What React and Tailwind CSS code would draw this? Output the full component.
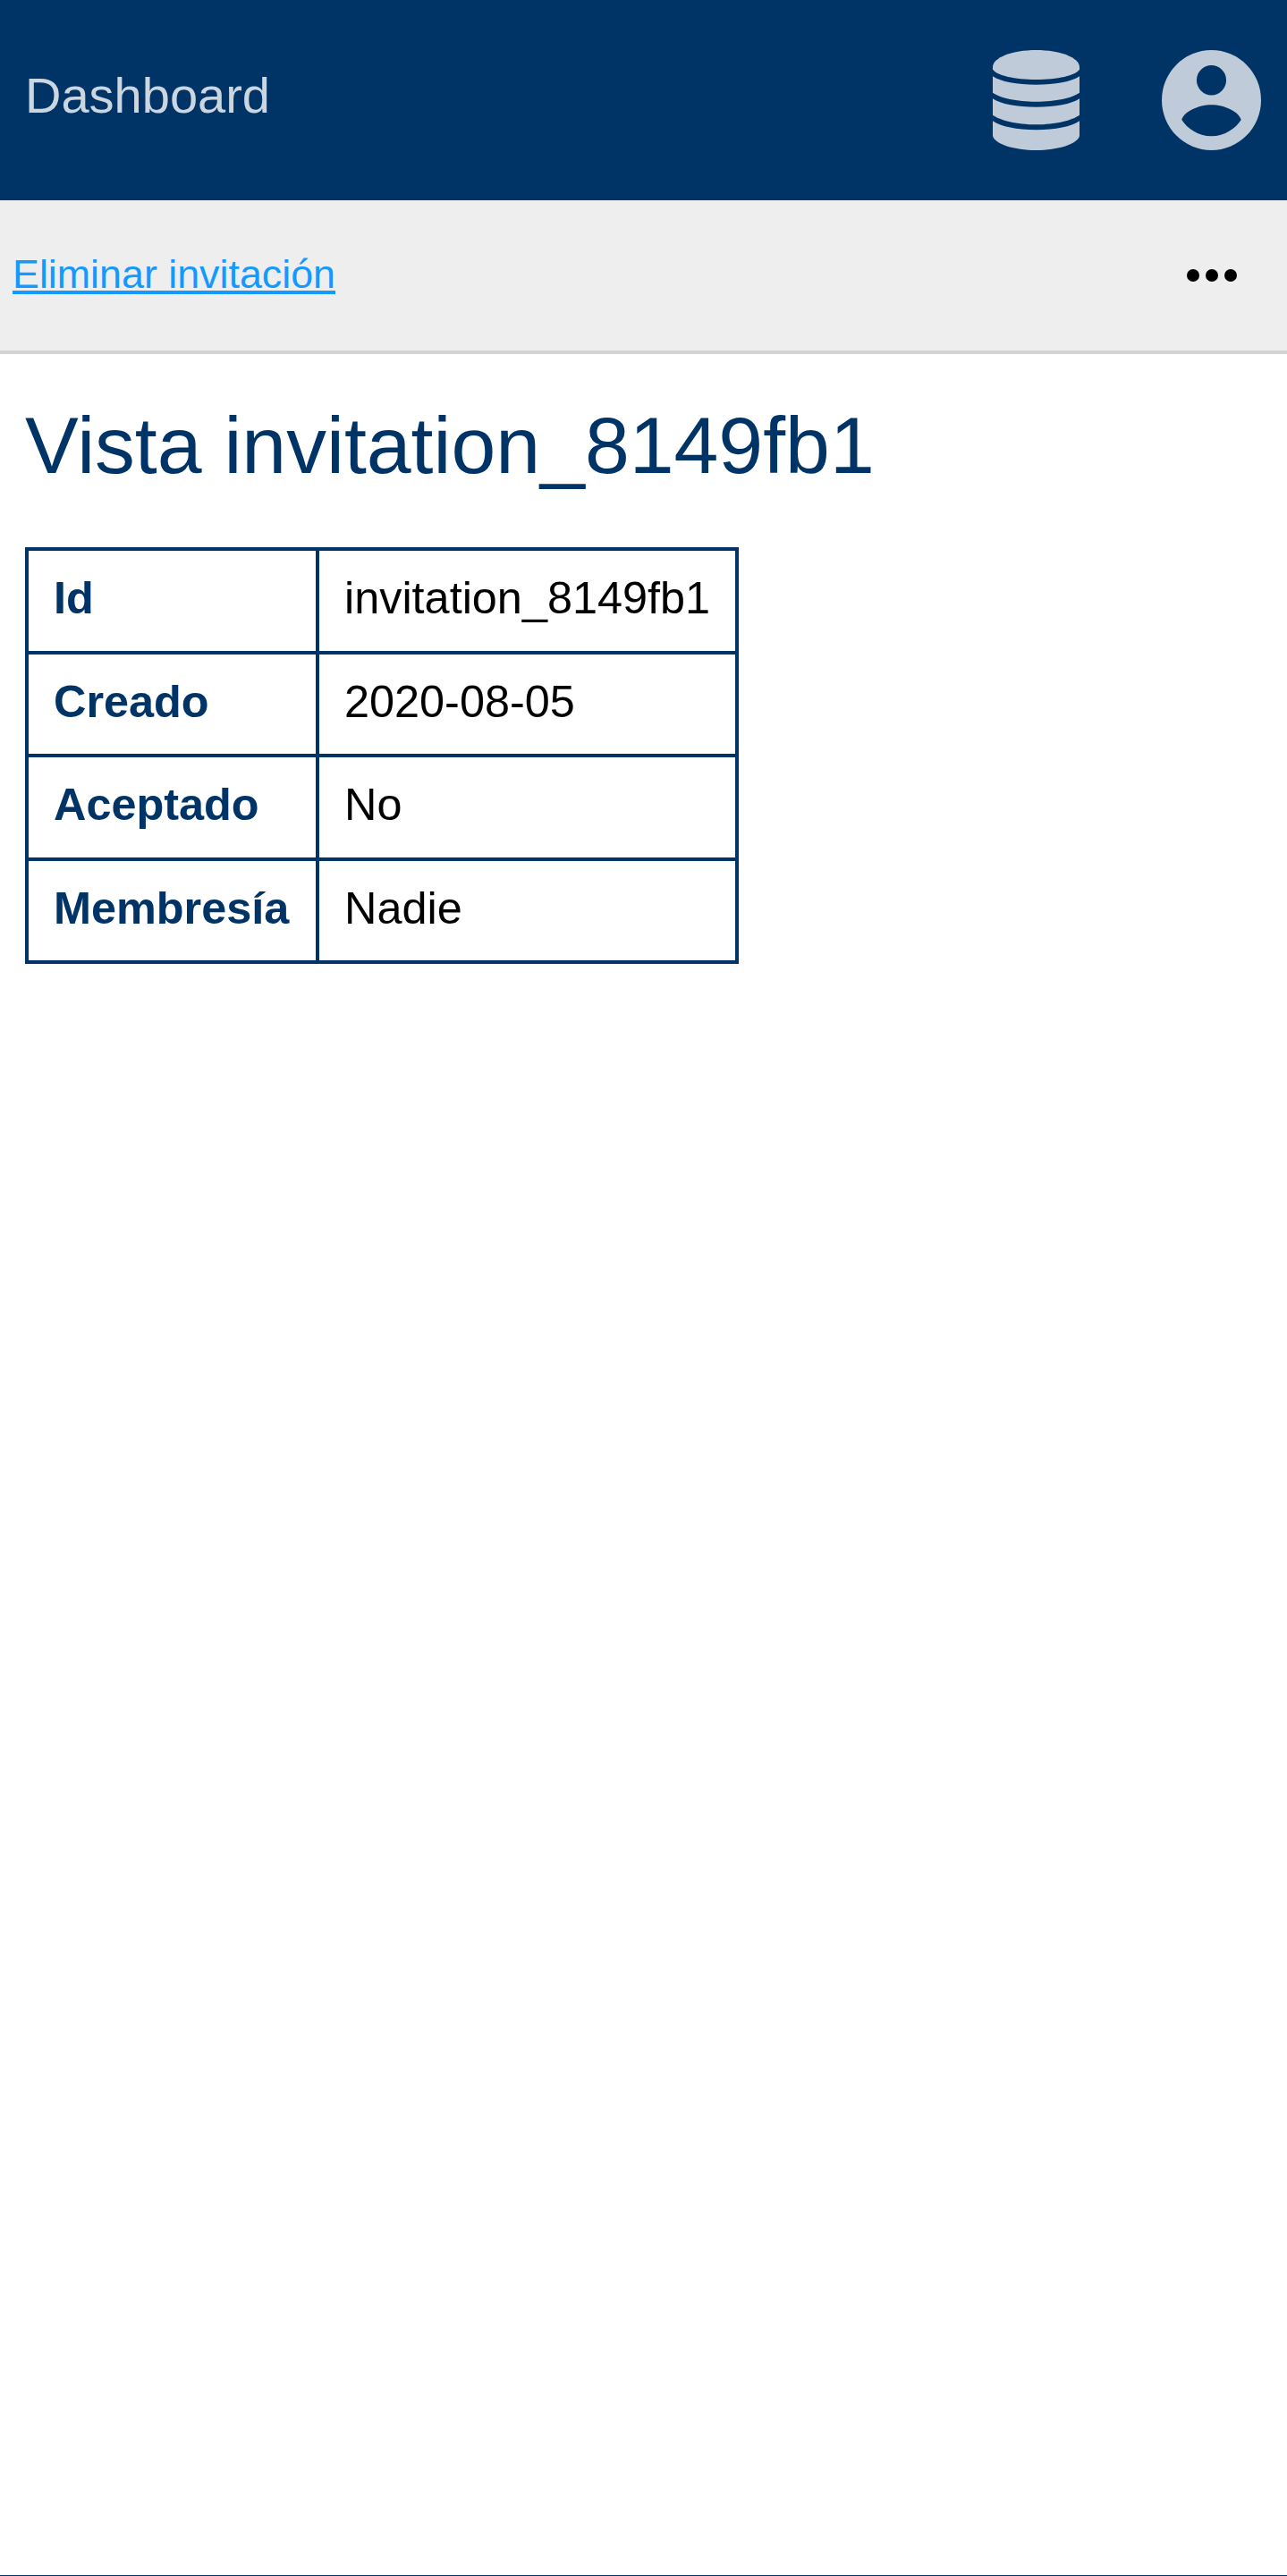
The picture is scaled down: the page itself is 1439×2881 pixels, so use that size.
import React from "react";

const rows = [
  ["Id", "invitation_8149fb1"],
  ["Creado", "2020-08-05"],
  ["Aceptado", "No"],
  ["Membresía", "Nadie"],
];

function DatabaseIcon() {
  return (
    <svg viewBox="0 0 97 112" className="w-[97px] h-[112px] fill-[#bfcbd8]">
      <path d="M0 19C0 8.500 21.700 0 48.500 0S97 8.500 97 19V21.500C93 28.500 72 33 48.500 33S4 28.500 0 21.500Z" />
      <path d="M0 29.300C9 35.500 27 38.700 48.500 38.700S88 35.500 97 29.300V47.700C89 53.500 70 57.700 48.500 57.700S8 53.500 0 47.700Z" />
      <path d="M0 54.300C9 60.500 27 63.700 48.500 63.700S88 60.500 97 54.300V72.700C89 78.500 70 83.300 48.500 83.300S8 78.500 0 72.700Z" />
      <path d="M0 79.300C9 85.500 27 89.300 48.500 89.300S88 85.500 97 79.300V96C95 105 73 112 48.500 112S2 105 0 96Z" />
    </svg>
  );
}

function UserIcon() {
  return (
    <svg viewBox="-56 -56 112 112" preserveAspectRatio="none" className="w-[111px] h-[112px] fill-[#bfcbd8]">
      <path
        fillRule="evenodd"
        d="M0 -56A56 56 0 1 1 0 56A56 56 0 1 1 0 -56ZM0 -39A16.700 16.700 0 1 0 0 -5.600A16.700 16.700 0 1 0 0 -39ZM-33.500 22C-31 13 -15 5.300 0 5.300S31 13 33.500 22C28 31 15 40.300 0 40.300S-28 31 -33.500 22Z"
      />
    </svg>
  );
}

export default function App() {
  return (
    <div className="h-[2881px] flex flex-col font-['Liberation_Sans',Arial,sans-serif] bg-white border-b border-[#003366]">
      {/* top nav */}
      <div className="h-[224px] bg-[#003366] flex items-center pl-[28px] pr-[29px]">
        <a className="flex-1 text-[56px] leading-[64px] text-[#ccd6e0] mb-[11px]">Dashboard</a>
        <div className="flex items-center gap-[92px]">
          <DatabaseIcon />
          <UserIcon />
        </div>
      </div>

      {/* actions */}
      <div className="h-[172px] bg-[#eeeeee] border-b-4 border-[#d3d3d3] flex items-center justify-between pl-[14px] pr-[56px]">
        <a className="text-[44.8px] leading-[52px] text-[#1499ff] underline mb-[4px]">Eliminar invitación</a>
        <svg viewBox="0 0 56 14" className="w-[56px] h-[14px] fill-black">
          <circle cx="7" cy="7" r="7" />
          <circle cx="28" cy="7" r="7" />
          <circle cx="49" cy="7" r="7" />
        </svg>
      </div>

      <div className="flex-1 px-[28px]">
        <h1 className="text-[89.6px] leading-[103px] text-[#003366] font-normal mt-[51px] mb-[62px]">
          Vista invitation_8149fb1
        </h1>
        <table className="table-fixed w-[798px] border-collapse border-4 border-[#003366]">
          <tbody>
            {rows.map(([label, value]) => (
              <tr key={label} className="h-[115.5px]">
                <th className="w-[325px] border-4 border-[#003366] pl-[28px] pb-[5px] text-left font-bold text-[#003366] text-[50.4px]">
                  {label}
                </th>
                <td className="border-4 border-[#003366] pl-[28px] pb-[5px] text-left text-black text-[50.4px]">
                  {value}
                </td>
              </tr>
            ))}
          </tbody>
        </table>
      </div>
    </div>
  );
}
